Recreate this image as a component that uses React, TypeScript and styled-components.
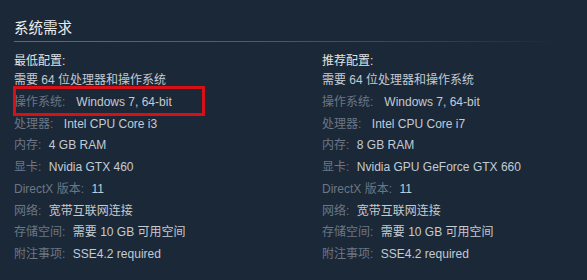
import styled, { createGlobalStyle } from "styled-components";

const GlobalStyle = createGlobalStyle`
  html, body {
    margin: 0;
    padding: 0;
    background: #1b2838;
  }
  body {
    width: 587px;
    height: 280px;
    overflow: hidden;
    font-family: "Liberation Sans", "Noto Sans CJK SC", Arial, sans-serif;
  }
`;

type Row = { label: string; value: string; gap?: number; highlight?: boolean };

type Spec = { title: string; note: string; rows: Row[] };

const minimum: Spec = {
  title: "最低配置:",
  note: "需要 64 位处理器和操作系统",
  rows: [
    { label: "操作系统:", value: "Windows 7, 64-bit", gap: 11, highlight: true },
    { label: "处理器:", value: "Intel CPU Core i3", gap: 10.5 },
    { label: "内存:", value: "4 GB RAM" },
    { label: "显卡:", value: "Nvidia GTX 460" },
    { label: "DirectX 版本:", value: "11" },
    { label: "网络:", value: "宽带互联网连接" },
    { label: "存储空间:", value: "需要 10 GB 可用空间" },
    { label: "附注事项:", value: "SSE4.2 required" },
  ],
};

const recommended: Spec = {
  title: "推荐配置:",
  note: "需要 64 位处理器和操作系统",
  rows: [
    { label: "操作系统:", value: "Windows 7, 64-bit", gap: 11 },
    { label: "处理器:", value: "Intel CPU Core i7", gap: 10.5 },
    { label: "内存:", value: "8 GB RAM" },
    { label: "显卡:", value: "Nvidia GPU GeForce GTX 660" },
    { label: "DirectX 版本:", value: "11" },
    { label: "网络:", value: "宽带互联网连接" },
    { label: "存储空间:", value: "需要 10 GB 可用空间" },
    { label: "附注事项:", value: "SSE4.2 required" },
  ],
};

const Panel = styled.section`
  padding: 19px 27px 0 14px;
`;

const Title = styled.h2`
  margin: 0;
  font-size: 14.5px;
  line-height: 18px;
  font-weight: normal;
  color: #e8ecef;
`;

const Divider = styled.div`
  height: 1px;
  margin: 4px 0 10px;
  background: linear-gradient(
    to right,
    #4d6f89 0%,
    #3f5e78 45%,
    #2e465c 75%,
    rgba(27, 40, 56, 0) 100%
  );
`;

const Columns = styled.div`
  display: grid;
  grid-template-columns: 308px 1fr;
`;

const ColHeading = styled.div`
  font-size: 12px;
  line-height: 18px;
  color: #dfe3e6;
`;

const List = styled.ul`
  list-style: none;
  margin: 0;
  padding: 0;
`;

const Item = styled.li`
  position: relative;
  font-size: 12px;
  line-height: 21.75px;
  color: #c3cbd3;
  white-space: nowrap;
`;

const Label = styled.span`
  color: #6b7784;
`;

const Value = styled.span<{ $gap: number }>`
  margin-left: ${({ $gap }) => $gap}px;
  color: #c3cbd3;
`;

/* red annotation box drawn over the row */
const Highlight = styled.span`
  position: absolute;
  left: -1px;
  top: -6px;
  width: 186px;
  height: 24px;
  border: 3px solid #d90f16;
  pointer-events: none;
`;

const Column = ({ spec }: { spec: Spec }) => (
  <div>
    <ColHeading>{spec.title}</ColHeading>
    <List>
      <Item>{spec.note}</Item>
      {spec.rows.map((r) => (
        <Item key={r.label}>
          <Label>{r.label}</Label>
          <Value $gap={r.gap ?? 7.5}>{r.value}</Value>
          {r.highlight && <Highlight />}
        </Item>
      ))}
    </List>
  </div>
);

export default function App() {
  return (
    <>
      <GlobalStyle />
      <Panel>
        <Title>系统需求</Title>
        <Divider />
        <Columns>
          <Column spec={minimum} />
          <Column spec={recommended} />
        </Columns>
      </Panel>
    </>
  );
}
